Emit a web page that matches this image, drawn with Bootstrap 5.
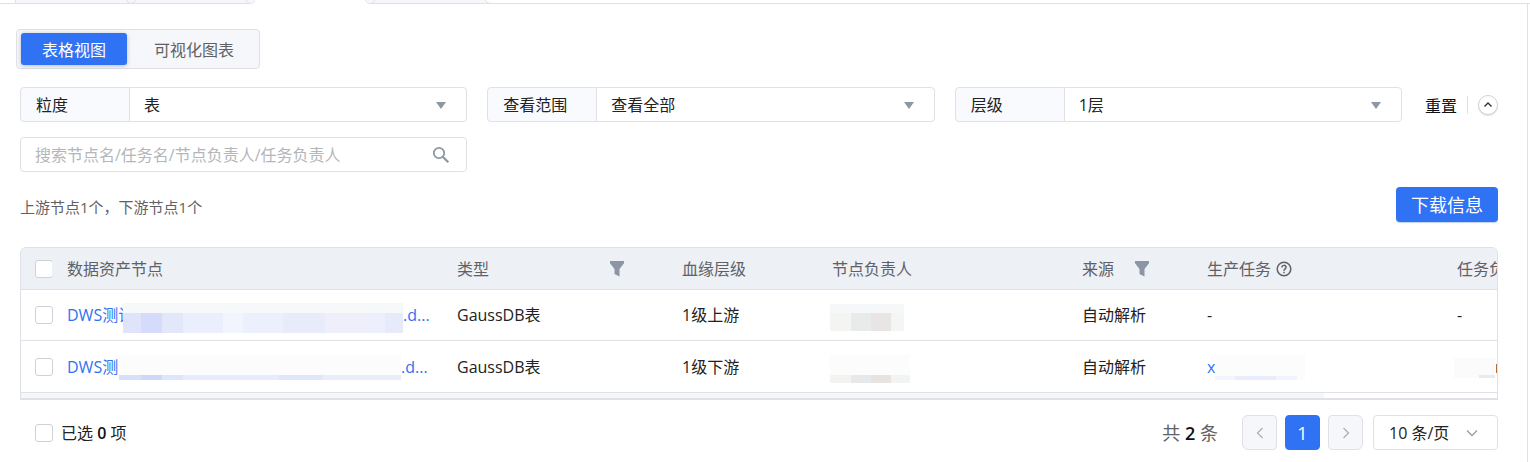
<!DOCTYPE html>
<html lang="zh-CN">
<head>
<meta charset="utf-8">
<meta name="viewport" content="width=device-width, initial-scale=1">
<title>数据血缘</title>
<link href="https://cdn.jsdelivr.net/npm/bootstrap@5.3.0/dist/css/bootstrap.min.css" rel="stylesheet">
<style>
  :root { --line: #dfe1e6; --brand: #2f72f3; --ink: #222; --muted-ink: #5f6166; --soft: #f6f7fa; }
  body { font-family: "Open Sans", "Noto Sans CJK SC", sans-serif; font-size: 16px; line-height: 24px; color: var(--ink); background: #fff; overflow-x: hidden; }
  .tab-strip { height: 4px; overflow: hidden; }
  .tab-rest { border-bottom: 1px solid var(--line); }
  .panel { margin-right: 2px; padding: 25px 29px 12px 20px; border-right: 1px solid var(--line); min-height: calc(100vh - 4px); }
  .view-switch { margin-left: -4px; padding: 3px 4px; height: 40px; background: var(--soft); border: 1px solid var(--line); border-radius: 4px; }
  .view-switch .btn { height: 32px; padding: 2px 21px 0; font-size: 16px; line-height: 24px; border: 0; border-radius: 3px; color: var(--muted-ink); }
  .view-switch .btn.active { background: var(--brand); color: #fff; box-shadow: 0 1px 4px rgba(60, 80, 120, .35); }
  .view-switch .btn + .btn { padding: 2px 21px 0 27px; }
  .filters { display: grid; grid-template-columns: repeat(3, 1fr) auto; gap: 15px 20px; margin-top: 18px; }
  .filters .input-group-text { width: 110px; height: 35px; padding: 0 15px; font-size: 16px; color: var(--ink); background: #f9fafd; border-color: var(--line); border-radius: 4px; }
  .filters .form-select { height: 35px; padding: 0 40px 0 14px; font-size: 16px; color: var(--ink); border-color: var(--line); border-radius: 4px;
    background: #fff url("data:image/svg+xml,%3Csvg xmlns='http://www.w3.org/2000/svg' viewBox='0 0 10 7'%3E%3Cpath fill='%238d98a3' d='M0 0h10L5 7z'/%3E%3C/svg%3E") no-repeat right 20px top 14px / 10px 7px; }
  .search-box { height: 35px; border: 1px solid var(--line); border-radius: 4px; padding: 0 16px 0 14px; }
  .search-box input { font-size: 16px; padding: 0; border: 0; height: 33px; box-shadow: none !important; }
  .search-box input::placeholder { color: #b4b6bb; opacity: 1; }
  .icon-btn { padding: 0; border: 0; background: none; line-height: 0; }
  .filter-tools { padding-left: 3px; gap: 10px; }
  .filter-tools a { color: #111; padding-top: 2px; }
  .rule { width: 1px; height: 18px; background: var(--line); }
  .fold-btn { width: 20px; height: 20px; border: 1px solid #cfd2d8; border-radius: 50%; background: #fff; box-shadow: 0 1px 1px #ddd; }
  .summary { margin: 15px 0 25px; font-size: 15px; color: var(--muted-ink); }
  .download { width: 102px; height: 35px; padding: 0; font-size: 18px; line-height: 24px; color: #fff; background: var(--brand); border: 0; border-radius: 4px; box-shadow: 0 1px 1px rgba(47, 114, 243, .3); }
  .table-frame { border: 1px solid var(--line); border-bottom-width: 2px; border-radius: 6px 6px 0 0; overflow: hidden; }
  .node-table { width: 1671px; table-layout: fixed; border-collapse: separate; border-spacing: 0; }
  .node-table th, .node-table td { padding: 0 0 0 15px; border-bottom: 1px solid var(--line); font-weight: 400; white-space: nowrap; }
  .node-table th { height: 42px; background: #edf0f5; color: var(--muted-ink); }
  .node-table tr > :first-child { padding-left: 14px; }
  .node-table td { height: 51px; }
  .node-table tr:last-child td { height: 52px; }
  .node-table .form-check-input, .footer-bar .form-check-input { width: 18px; height: 18px; margin: 0; border: 1px solid #ced1d8; border-radius: 3px; float: none; display: block; }
  .node-table a { color: var(--brand); }
  .cut { overflow: hidden; }
  .filter-head { padding-right: 43px; }
  .veil { flex: none; background-repeat: no-repeat; }
  .veil-name-a { width: 280px; height: 30px; margin-top: 5px; background: linear-gradient(#f7f8f9, #f7f8f9) 0 0 / 100% 10px no-repeat, linear-gradient(90deg, #dfe4fa 0 18px, #d5dbfb 18px 39px, #e3e7fa 39px 60px, #ebeefc 60px 100px, #f2f4fe 100px 120px, #eceffc 120px 160px, #e7ebfa 160px 202px, #efeffc 202px 240px, #edeffc 240px 262px, #e6eafa 262px); }
  .veil-name-b { width: 282px; height: 25px; margin-top: 1px; background: linear-gradient(#fcfcfd, #fcfcfd) 0 0 / 100% 20px no-repeat, linear-gradient(90deg, #d8dff8 0 22px, #ced8f8 22px 43px, #dfe5fa 43px 64px, #e7ebfc 64px 160px, #e1e7fa 160px 204px, #e9ecfb 204px); }
  .veil-owner-a { width: 74px; height: 27px; margin: 4px 0 0 -2px; background: linear-gradient(#f6f7f9, #f6f7f9) 0 0 / 100% 9px no-repeat, linear-gradient(90deg, #f4f4f3 0 21px, #e9ebeb 21px 41px, #e8e5e4 41px 61px, #f4f6f5 61px); }
  .veil-owner-b { width: 80px; height: 29px; margin: 4px 0 0 -2px; background: linear-gradient(#fcfcfd, #fcfcfd) 0 0 / 100% 21px no-repeat, linear-gradient(90deg, #f3f3f1 0 21px, #e6e8ea 21px 41px, #e6e3e1 41px 61px, #f2f4f3 61px); }
  .veil-task { width: 90px; height: 26px; background: linear-gradient(90deg, #f2f4fe 0 20px, #e8ecfd 20px 61px, #f1f3fe 61px) 0 100% / 82px 4px no-repeat, #fcfcfd; }
  .veil-last { width: 41px; height: 20px; margin: 2px 0 0 -3px; background: linear-gradient(#e9ebeb, #e9ebeb) 100% 100% / 16px 3px no-repeat, #fbfbfb; }
  .scroll-track { height: 5px; }
  .scroll-thumb { height: 5px; background: #f5f6f7; }
  .footer-bar { margin-top: 15px; padding-left: 15px; }
  .total { font-size: 18px; color: var(--muted-ink); margin-right: 24px; }
  .total b, .footer-bar b { font-weight: 600; color: #111; }
  .pager { gap: 8px; }
  .pager .page-link { width: 35px; height: 35px; padding: 0; display: flex; align-items: center; justify-content: center; font-size: 18px; background: var(--soft); border: 1px solid var(--line); border-radius: 4px; }
  .pager .page-item .page-link { margin: 0; }
  .pager .active .page-link { background: var(--brand); border-color: var(--brand); color: #fff; }
  .page-size { width: 125px; height: 35px; margin-left: 10px; padding: 0 30px 0 15px; font-size: 16px; color: var(--ink); border-color: var(--line); border-radius: 4px;
    background: #fff url("data:image/svg+xml,%3Csvg xmlns='http://www.w3.org/2000/svg' viewBox='0 0 12 8'%3E%3Cpath fill='none' stroke='%239a9fa9' stroke-width='1.4' d='M1 1.5l5 5 5-5'/%3E%3C/svg%3E") no-repeat right 19px center / 12px 8px; }
</style>
</head>
<body>
<div class="tab-strip d-flex" aria-hidden="true">
  <svg width="500" height="4" viewBox="0 0 500 4" fill="none" stroke="#dfe1e6">
    <path fill="#f6f7fa" stroke="none" d="M15 0h238l-3 3H15zM367 0h118l3 3H370z"/>
    <path d="M0 3.500h250q4 0 4.500-3.500M15.500 0v3M126.500 0q1 3 4.500 3.500q4-.5 4.500-3.500M246 0q1 3 4 3.500M365.500 0q1 3.500 5 3.500H500M370.500 3.500q4-.5 4.500-3.500M485.500 0q1 3 4.500 3.500"/>
  </svg>
  <div class="tab-rest flex-fill"></div>
</div>
<main class="panel">
  <div class="view-switch d-inline-flex align-top" role="group" aria-label="视图">
    <button type="button" class="btn active">表格视图</button>
    <button type="button" class="btn">可视化图表</button>
  </div>

  <form class="filters">
    <div class="input-group flex-nowrap">
      <label class="input-group-text" for="grain">粒度</label>
      <select class="form-select" id="grain"><option>表</option></select>
    </div>
    <div class="input-group flex-nowrap">
      <label class="input-group-text" for="scope">查看范围</label>
      <select class="form-select" id="scope"><option>查看全部</option></select>
    </div>
    <div class="input-group flex-nowrap">
      <label class="input-group-text" for="level">层级</label>
      <select class="form-select" id="level"><option>1层</option></select>
    </div>
    <div class="filter-tools d-flex align-items-center">
      <a href="#" class="text-decoration-none">重置</a>
      <span class="rule"></span>
      <button type="button" class="icon-btn fold-btn" aria-label="收起">
        <svg width="10" height="8" viewBox="0 0 10 8" fill="none" stroke="#333" stroke-width="1.400"><path d="M1.500 5.500L5 2l3.500 3.500"/></svg>
      </button>
    </div>
    <div class="search-box d-flex align-items-center">
      <input type="text" class="form-control" aria-label="搜索" placeholder="搜索节点名/任务名/节点负责人/任务负责人">
      <button type="button" class="icon-btn" aria-label="搜索">
        <svg width="18" height="18" viewBox="0 0 18 18" fill="none" stroke="#8d98a3"><circle cx="7" cy="7" r="5.200" stroke-width="1.800"/><path stroke-width="2.200" d="M10.800 10.800L16.300 16.300"/></svg>
      </button>
    </div>
  </form>

  <div class="summary d-flex justify-content-between align-items-center">
    <span class="pt-1">上游节点1个，下游节点1个</span>
    <button type="button" class="btn download">下载信息</button>
  </div>

  <div class="table-frame">
    <table class="node-table align-middle">
      <colgroup><col style="width:31px"><col style="width:390px"><col style="width:225px"><col style="width:150px"><col style="width:250px"><col style="width:125px"><col style="width:250px"><col style="width:250px"></colgroup>
      <thead>
        <tr>
          <th><input class="form-check-input" type="checkbox" aria-label="全选"></th>
          <th>数据资产节点</th>
          <th><div class="filter-head d-flex justify-content-between align-items-center">类型
            <button type="button" class="icon-btn" aria-label="筛选类型"><svg width="14" height="16" viewBox="0 0 14 16"><path fill="#8d95a5" d="M0 0h14v2.200L9.500 8v7.500L4.500 13V8L0 2.200z"/></svg></button></div></th>
          <th>血缘层级</th>
          <th>节点负责人</th>
          <th><div class="filter-head d-flex justify-content-between align-items-center">来源
            <button type="button" class="icon-btn" aria-label="筛选来源"><svg width="14" height="16" viewBox="0 0 14 16"><path fill="#8d95a5" d="M0 0h14v2.200L9.500 8v7.500L4.500 13V8L0 2.200z"/></svg></button></div></th>
          <th><div class="d-flex align-items-center">生产任务
            <svg class="ms-1" width="18" height="16" viewBox="-1 0 18 16" fill="none" stroke="#5f6166" stroke-width="1.500"><circle cx="8" cy="8" r="6.800"/><path d="M5.900 6.500C5.900 3.700 10.100 3.700 10.100 6.300C10.100 7.900 8 7.800 8 9.700M8 10.800v1.500"/></svg></div></th>
          <th>任务负责人</th>
        </tr>
      </thead>
      <tbody>
        <tr>
          <td><input class="form-check-input" type="checkbox" aria-label="选择第1行"></td>
          <td><a href="#" class="d-flex align-items-center text-decoration-none"><span class="cut" style="width:56px">DWS测试</span><span class="veil veil-name-a"></span><span>.d...</span></a></td>
          <td>GaussDB表</td>
          <td>1级上游</td>
          <td><div class="veil veil-owner-a"></div></td>
          <td>自动解析</td>
          <td>-</td>
          <td>-</td>
        </tr>
        <tr>
          <td><input class="form-check-input" type="checkbox" aria-label="选择第2行"></td>
          <td><a href="#" class="d-flex align-items-center text-decoration-none"><span class="cut" style="width:52px">DWS测试</span><span class="veil veil-name-b"></span><span>.d...</span></a></td>
          <td>GaussDB表</td>
          <td>1级下游</td>
          <td><div class="veil veil-owner-b"></div></td>
          <td>自动解析</td>
          <td><a href="#" class="d-flex align-items-center text-decoration-none">x<span class="veil veil-task"></span></a></td>
          <td><div class="d-flex align-items-center"><span class="veil veil-last"></span>n</div></td>
        </tr>
      </tbody>
    </table>
    <div class="scroll-track"><div class="scroll-thumb" style="width:88.300%"></div></div>
  </div>

  <div class="footer-bar d-flex align-items-center justify-content-between">
    <div class="d-flex align-items-center gap-2">
      <input class="form-check-input" type="checkbox" id="picked">
      <label for="picked">已选 <b>0</b> 项</label>
    </div>
    <div class="d-flex align-items-center">
      <span class="total">共 <b>2</b> 条</span>
      <ul class="pagination pager mb-0">
        <li class="page-item disabled"><a class="page-link" href="#" aria-label="上一页"><svg width="8" height="12" viewBox="0 0 8 12" fill="none" stroke="#adb0b8" stroke-width="1.300"><path d="M6.500 1L1.500 6l5 5"/></svg></a></li>
        <li class="page-item active"><a class="page-link" href="#">1</a></li>
        <li class="page-item disabled"><a class="page-link" href="#" aria-label="下一页"><svg width="8" height="12" viewBox="0 0 8 12" fill="none" stroke="#adb0b8" stroke-width="1.300"><path d="M1.500 1l5 5-5 5"/></svg></a></li>
      </ul>
      <select class="form-select page-size" aria-label="每页条数"><option>10 条/页</option></select>
    </div>
  </div>
</main>
<script src="https://cdn.jsdelivr.net/npm/bootstrap@5.3.0/dist/js/bootstrap.bundle.min.js"></script>
</body>
</html>
